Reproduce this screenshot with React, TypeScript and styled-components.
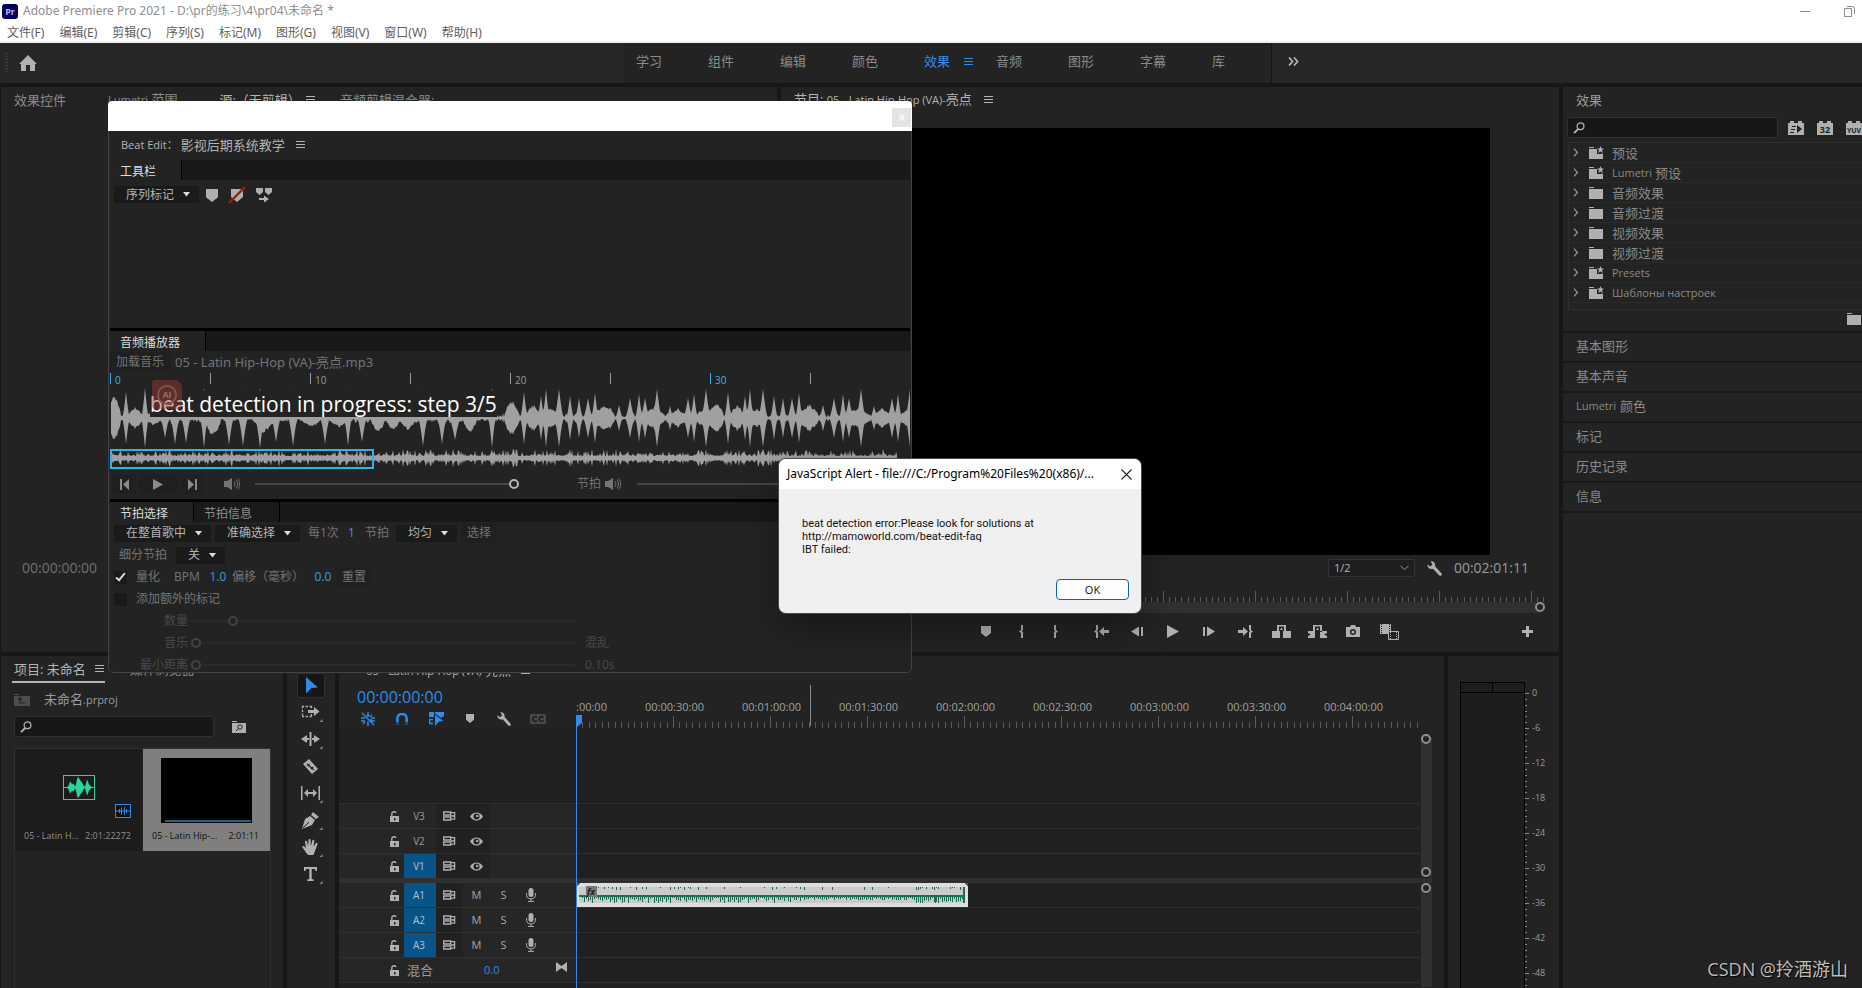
import React from "react";
import styled, { createGlobalStyle, css } from "styled-components";

const GlobalStyle = createGlobalStyle`
  *, *::before, *::after { box-sizing: border-box; }
  html, body { margin: 0; background: #171717; }
  body {
    font-family: "Open Sans", "Noto Sans CJK SC", sans-serif;
    font-size: 12px;
    line-height: 16px;
    color: #9a9a9a;
    overflow: hidden;
  }
  button, input, select { font: inherit; color: inherit; margin: 0; }
  svg { display: block; flex: none; }
`;

/* ---------- shared pieces ---------- */

const Page = styled.div`
  position: relative;
  display: flex;
  flex-direction: column;
  height: 100vh;
  overflow: hidden;
  background: #171717;
  white-space: nowrap;
`;

const PlainButton = styled.button`
  display: flex;
  align-items: center;
  justify-content: center;
  flex: none;
  padding: 0;
  border: 0;
  background: none;
`;

const Panel = styled.section`
  display: flex;
  flex-direction: column;
  min-width: 0;
  min-height: 0;
  overflow: hidden;
  background: #232323;
`;

const PanelHeader = styled.header`
  display: flex;
  align-items: center;
  flex: none;
  height: 27px;
  padding: 0 0 2px 13px;
  font-size: 13px;
`;

const Small = styled.span`
  font-size: 11px;
`;

const Burger = ({ color = "#b4b4b4" }: { color?: string }) => (
  <svg width="9" height="9" viewBox="0 0 9 9" fill={color} shapeRendering="crispEdges">
    <path d="M0 1h9v1H0zM0 4h9v1H0zM0 7h9v1H0z" />
  </svg>
);

/* ---------- title and menus ---------- */

const TitleBar = styled.div`
  display: flex;
  align-items: center;
  flex: none;
  height: 24px;
  padding: 0 7px 2px 2px;
  gap: 5px;
  background: #fff;
  color: #8d8d8d;
  font-family: "Noto Sans", "Noto Sans CJK SC", sans-serif;
`;

const AppLogo = styled.span`
  width: 16px;
  height: 15px;
  border-radius: 3px;
  background: #00005b;
  color: #b5b2ff;
  font-size: 9px;
  font-weight: 700;
  line-height: 15px;
  text-align: center;
`;

const WindowButtons = styled.div`
  display: flex;
  align-items: center;
  gap: 34px;
  margin-left: auto;
`;

const MenuBar = styled.nav`
  display: flex;
  flex: none;
  height: 19px;
  padding-left: 7px;
  gap: 15px;
  border-bottom: 2px solid #eeefee;
  background: #fff;
  color: #5e5e5e;
  font-family: "Noto Sans", "Noto Sans CJK SC", sans-serif;
`;

const WorkspaceBar = styled.div`
  display: flex;
  align-items: center;
  flex: none;
  height: 40px;
  margin-bottom: 4px;
  background: #262626;
`;

const HomeArea = styled.div`
  display: flex;
  align-items: center;
  flex: 630 1 0;
  gap: 11px;
  padding-left: 5px;
`;

const WorkspaceTabs = styled.div`
  display: flex;
  align-items: center;
  flex: none;
  width: 648px;
  height: 40px;
  padding-left: 12px;
  border-right: 1px solid #161616;
  background: #232323;
`;

const WorkspaceTab = styled(PlainButton)<{ $active?: boolean }>`
  justify-content: flex-start;
  width: 72px;
  gap: 14px;
  padding-bottom: 4px;
  font-size: 13px;
  color: ${(p) => (p.$active ? "#2d8ceb" : "#8a8a8a")};
`;

const MoreArea = styled.div`
  display: flex;
  align-items: center;
  flex: 584 1 0;
  padding: 0 0 3px 16px;
`;

/* ---------- page grid ---------- */

const Workspace = styled.main`
  display: flex;
  flex: 1;
  min-height: 0;
  gap: 4px;
  padding-left: 1px;
`;

const MainColumn = styled.div`
  display: flex;
  flex-direction: column;
  flex: 1;
  min-width: 0;
  gap: 4px;
`;

const Row = styled.div<{ $grow: number }>`
  display: flex;
  flex: ${(p) => p.$grow} 1 0;
  min-height: 0;
  gap: 4px;
`;

/* ---------- source panel ---------- */

const SourcePanel = styled(Panel)`
  flex: 776 1 0;
  justify-content: space-between;
`;

const ProgramPanel = styled(Panel)`
  flex: 778 1 0;
`;

const SourceTabs = styled(PanelHeader)`
  gap: 25px;
`;

const SourceTab = styled(PlainButton)<{ $active?: boolean }>`
  gap: 5px;
  padding-right: ${(p) => (p.$active ? 0 : 17)}px;
  color: ${(p) => (p.$active ? "#b4b4b4" : "#8a8a8a")};
`;

const SourceTime = styled.div`
  height: 26px;
  margin-bottom: 71px;
  padding-left: 21px;
  font-size: 14px;
  line-height: 26px;
  color: #707070;
`;

/* ---------- program panel ---------- */

const ProgramHeader = styled(PanelHeader)`
  gap: 12px;
  padding-left: 13px;
  color: #b4b4b4;
`;

const Video = styled.div`
  flex: 1;
  margin: 14px 69px 0;
  background: #000;
`;

const ProgramControls = styled.div`
  display: flex;
  align-items: center;
  justify-content: flex-end;
  flex: none;
  height: 26px;
  gap: 12px;
  padding-right: 30px;
  font-size: 14px;
  color: #9a9a9a;
`;

const SelectBox = styled.label<{ $width: number; $outlined?: boolean }>`
  display: flex;
  align-items: center;
  flex: none;
  width: ${(p) => p.$width}px;
  height: 17px;
  background: #1a1a1a;
  ${(p) =>
    p.$outlined &&
    css`
      height: 18px;
      border: 1px solid #333;
      border-radius: 2px;
      font-size: 11px;
      background: #1e1e1e;
    `}
  select {
    flex: 1;
    min-width: 0;
    height: 16px;
    padding: 0 0 0 ${(p) => (p.$outlined ? 5 : 12)}px;
    border: 0;
    appearance: none;
    background: none;
    color: #b4b4b4;
    line-height: 16px;
  }
  svg { margin-right: ${(p) => (p.$outlined ? 5 : 9)}px; }
`;

const ProgramRuler = styled.div`
  display: flex;
  align-items: flex-end;
  flex: none;
  height: 21px;
  margin: 0 14px;
  overflow: hidden;
`;

const ZoomBar = styled.div`
  display: flex;
  justify-content: flex-end;
  flex: none;
  height: 11px;
  margin: 0 14px;
  border-radius: 5px;
  background: #303030;
`;

const Knob = styled.span`
  flex: none;
  width: 10px;
  height: 10px;
  border: 2px solid #8f8f8f;
  border-radius: 50%;
  background: #232323;
`;

const Transport = styled.div`
  display: flex;
  align-items: center;
  flex: none;
  height: 39px;
  padding: 0 24px 2px 187px;
`;

const TransportGroup = styled.div<{ $pitch: number }>`
  display: flex;
  margin-right: 10px;
  button { width: ${(p) => p.$pitch}px; }
  & + & { margin-right: auto; }
`;

/* ---------- effects panel ---------- */

const EffectsPanel = styled(Panel)`
  flex: none;
  width: 299px;
`;

const SearchField = styled.label<{ $width: number }>`
  display: flex;
  align-items: center;
  flex: none;
  width: ${(p) => p.$width}px;
  height: 21px;
  padding-left: 5px;
  border: 1px solid #303030;
  border-radius: 3px;
  background: #171717;
  input {
    flex: 1;
    min-width: 0;
    height: 18px;
    border: 0;
    outline: 0;
    background: none;
  }
`;

const EffectsSearch = styled.div`
  display: flex;
  align-items: center;
  flex: none;
  height: 21px;
  margin: 3px 0 4px 4px;
  gap: 10px;
`;

const EffectFilters = styled.div`
  display: flex;
  gap: 13px;
`;

const EffectsList = styled.ul`
  flex: none;
  height: 168px;
  margin: 0 0 0 5px;
  padding: 0;
  border: 1px solid #2e2e2e;
  border-right: 0;
  list-style: none;
`;

const EffectsItem = styled.li`
  display: flex;
  align-items: center;
  height: 20px;
  padding-left: 4px;
  border-bottom: 1px solid #2a2a2a;
  font-size: 13px;
  color: #8a8a8a;
  svg:first-child { margin-right: 10px; }
  svg + svg { margin-right: 8px; }
`;

const BinRow = styled.div`
  display: flex;
  flex: none;
  align-items: flex-start;
  justify-content: flex-end;
  height: 21px;
  padding-top: 2px;
`;

const SidePanelTitle = styled(PlainButton)`
  justify-content: flex-start;
  height: 30px;
  padding: 0 0 3px 13px;
  gap: 4px;
  border-top: 2px solid #181818;
  font-size: 13px;
  color: #8a8a8a;
  &:last-of-type { height: 32px; border-bottom: 2px solid #181818; }
`;

const Watermark = styled.div`
  position: absolute;
  right: 14px;
  bottom: 7px;
  font-size: 18px;
  line-height: 24px;
  color: #bdbdbd;
  text-shadow: 1px 1px 1px #000;
`;

/* ---------- project panel ---------- */

const ProjectPanel = styled(Panel)`
  flex: none;
  width: 282px;
`;

const ProjectTabs = styled(PanelHeader)`
  gap: 23px;
  padding: 0 0 0 11px;
`;

const ProjectTab = styled(PlainButton)<{ $active?: boolean }>`
  height: 26px;
  gap: 9px;
  padding: 0 1px 0 2px;
  border-bottom: 2px solid ${(p) => (p.$active ? "#b4b4b4" : "transparent")};
  color: ${(p) => (p.$active ? "#b4b4b4" : "#8a8a8a")};
`;

const ProjectPath = styled.div`
  display: flex;
  align-items: center;
  flex: none;
  height: 33px;
  padding-left: 13px;
  gap: 14px;
  font-size: 13px;
`;

const ProjectSearch = styled.div`
  display: flex;
  align-items: center;
  flex: none;
  margin: 0 0 11px 13px;
  gap: 18px;
`;

const ThumbGrid = styled.div`
  display: flex;
  flex: 1;
  align-items: flex-start;
  gap: 1px;
  margin: 0 12px 0 13px;
  border: 1px solid #303030;
  border-bottom: 0;
`;

const Thumb = styled.figure<{ $selected?: boolean }>`
  position: relative;
  display: flex;
  flex-direction: column;
  flex: 1;
  height: 102px;
  margin: 0;
  padding-top: 9px;
  background: ${(p) => (p.$selected ? "#7f7f7f" : "#1c1c1c")};
  color: ${(p) => (p.$selected ? "#111" : "#8f8f8f")};
`;

const ThumbImage = styled.div<{ $audio?: boolean }>`
  display: flex;
  align-items: center;
  justify-content: center;
  height: 65px;
  padding-bottom: ${(p) => (p.$audio ? 6 : 0)}px;
`;

const ThumbFrame = styled.div`
  display: flex;
  align-items: flex-end;
  width: 91px;
  height: 65px;
  padding: 0 1px 1px 4px;
  background: #000;
  &::after { content: ""; flex: 1; height: 2px; background: #1f5f80; }
`;

const ThumbBadge = styled.span`
  position: absolute;
  right: 11px;
  bottom: 33px;
`;

const ThumbCaption = styled.figcaption`
  display: flex;
  justify-content: space-between;
  padding: 5px 11px 0 9px;
  font-size: 9px;
`;

/* ---------- tools ---------- */

const ToolsPanel = styled(Panel)`
  flex: none;
  width: 48px;
  align-items: center;
  padding-top: 17px;
  gap: 2px;
`;

const Tool = styled(PlainButton)<{ $active?: boolean }>`
  width: 28px;
  height: 25px;
  border: 1px solid ${(p) => (p.$active ? "#303030" : "transparent")};
  border-radius: 2px;
  background: ${(p) => (p.$active ? "#161616" : "none")};
`;

/* ---------- timeline ---------- */

const TimelinePanel = styled(Panel)`
  position: relative;
  flex: 1;
`;

const TimelineTitle = styled(PanelHeader)`
  gap: 10px;
  padding: 1px 0 0 11px;
  color: #b4b4b4;
`;

const TimelineTop = styled.div`
  display: flex;
  flex: none;
  height: 45px;
  padding-right: 24px;
`;

const TimelineTools = styled.div`
  flex: none;
  width: 237px;
`;

const TimelineTime = styled.div`
  height: 27px;
  padding-left: 18px;
  font-size: 16px;
  line-height: 28px;
  color: #2d8ceb;
`;

const TimelineIcons = styled.div`
  display: flex;
  padding-left: 12px;
  button { width: 34px; height: 17px; }
`;

const TimeRuler = styled.div`
  display: flex;
  flex-direction: column;
  justify-content: flex-end;
  flex: 1;
  min-width: 0;
  overflow: hidden;
  font-size: 11px;
  color: #a0a0a0;
`;

const TimeLabels = styled.div`
  display: flex;
  padding-bottom: 1px;
  span { flex: none; width: 97px; text-align: center; }
  span:first-child { width: 50px; text-align: left; }
`;

const TimelineBody = styled.div`
  display: flex;
  flex: 1;
  min-height: 0;
  padding-right: 12px;
`;

const Tracks = styled.div`
  flex: 1;
  min-width: 0;
  padding-top: 75px;
  background: #202020;
`;

const Track = styled.div<{ $first?: boolean }>`
  display: flex;
  height: ${(p) => (p.$first ? 24 : 25)}px;
  border-top: ${(p) => (p.$first ? 0 : 1)}px solid #303030;
`;

const TrackHead = styled.div`
  display: flex;
  flex: none;
  align-items: center;
  width: 237px;
  padding-left: 48px;
  background: #262626;
  color: #9a9a9a;
  font-size: 11px;
`;

const HeadCell = styled(PlainButton)<{ $on?: boolean; $dark?: boolean }>`
  align-self: stretch;
  width: 27px;
  color: #a8a8a8;
  background: ${(p) => (p.$dark ? "#212121" : "none")};
`;

const LabelCell = styled(HeadCell)`
  width: 32px;
  padding-right: 2px;
  font-size: 10px;
  color: ${(p) => (p.$on ? "#a8c4d6" : "#9a9a9a")};
  background: ${(p) => (p.$on ? "#085487" : "none")};
`;

const LockCell = styled(HeadCell)`
  width: 17px;
  padding-right: 2px;
`;

const MixLabel = styled.span`
  width: 80px;
  padding-left: 3px;
  font-size: 13px;
`;

const MixValue = styled.span`
  flex: 1;
  color: #2d8ceb;
`;

const Splitter = styled.div`
  flex: none;
  height: 5px;
  background: #303030;
`;

const ScrollColumn = styled.div`
  display: flex;
  flex-direction: column;
  flex: none;
  width: 11px;
  padding-top: 6px;
  margin-left: 1px;
`;

const ScrollPart = styled.div<{ $height?: number }>`
  display: flex;
  flex-direction: column;
  justify-content: space-between;
  height: ${(p) => (p.$height ? p.$height + "px" : "auto")};
  margin-bottom: 1px;
  flex: ${(p) => (p.$height ? "none" : 1)};
  border-radius: 5px 5px 0 0;
  background: #303030;
`;

const Playhead = styled.div`
  position: absolute;
  left: 237px;
  top: 71px;
  bottom: 0;
  width: 1px;
  background: #2d8ceb;
  &::before {
    content: "";
    position: absolute;
    left: 0;
    top: -12px;
    width: 6px;
    height: 12px;
    background: #2d8ceb;
    clip-path: polygon(0 0, 100% 0, 100% 65%, 20% 100%, 0 100%);
  }
`;

const HoverLine = styled.div`
  position: absolute;
  left: 471px;
  top: 29px;
  width: 1px;
  height: 41px;
  background: #8a8a8a;
`;

/* ---------- audio meters ---------- */

const MetersPanel = styled(Panel)`
  flex: none;
  flex-direction: row;
  width: 111px;
  padding-left: 12px;
`;

const MeterBox = styled.div`
  flex: none;
  width: 65px;
  margin-top: 26px;
  border: 1px solid #000;
  border-bottom: 0;
  background: #1d1d1d;
`;

const MeterClip = styled.div`
  display: flex;
  height: 10px;
  border-bottom: 1px solid #000;
  span { flex: 1; }
  span + span { border-left: 1px solid #000; }
`;

const MeterScale = styled.div`
  padding: 19px 0 0 3px;
  font-size: 9px;
  line-height: 35px;
  color: #9a9a9a;
  div { height: 35px; }
`;

/* ---------- beat edit window ---------- */

const BeatWindow = styled.section`
  position: absolute;
  left: 108px;
  top: 101px;
  display: flex;
  flex-direction: column;
  width: 804px;
  height: 572px;
  border-radius: 4px 4px 5px 5px;
  overflow: hidden;
  background: #232323;
`;

const BeatTitleBar = styled.div`
  display: flex;
  justify-content: flex-end;
  flex: none;
  height: 30px;
  padding: 7px 1px 0 0;
  background: #fff;
`;

const BeatClose = styled(PlainButton)`
  width: 19px;
  height: 19px;
  background: #e3e3e3;
`;

const BeatBody = styled.div`
  display: flex;
  flex-direction: column;
  flex: 1;
  min-height: 0;
  padding: 0 1px;
  border: 1px solid #444;
  border-top: 0;
  border-radius: 0 0 5px 5px;
  overflow: hidden;
`;

const BeatHeading = styled.div`
  display: flex;
  align-items: center;
  flex: none;
  height: 29px;
  padding: 0 0 2px 11px;
  gap: 3px;
  font-size: 13px;
  color: #b4b4b4;
  svg { margin-left: 8px; }
`;

const TabStrip = styled.div<{ $ruled?: boolean }>`
  display: flex;
  flex: none;
  height: ${(p) => (p.$ruled ? 23 : 20)}px;
  border-top: ${(p) => (p.$ruled ? 3 : 0)}px solid #000;
  background: #191919;
`;

const StripTab = styled(PlainButton)<{ $width: number; $idle?: boolean }>`
  justify-content: flex-start;
  width: ${(p) => p.$width}px;
  padding: 3px 0 0 10px;
  border-right: 1px solid #000;
  background: ${(p) => (p.$idle ? "#1a1a1a" : "#232323")};
  color: ${(p) => (p.$idle ? "#8f8f8f" : "#dcdcdc")};
`;

const ToolArea = styled.div`
  display: flex;
  align-items: flex-start;
  flex: none;
  height: 148px;
  padding: 6px 0 0 4px;
  gap: 7px;
`;

const IconRow = styled.div`
  display: flex;
  gap: 10px;
`;

const LoadRow = styled.div`
  display: flex;
  align-items: center;
  flex: none;
  height: 22px;
  color: #747474;
  gap: 5px;
`;

const LoadButton = styled(PlainButton)`
  width: 60px;
  height: 20px;
  background: #202020;
`;

const FileName = styled.span`
  font-family: "Noto Sans", "Noto Sans CJK SC", sans-serif;
  font-size: 13px;
`;

const BeatRuler = styled.div`
  display: flex;
  flex: none;
  height: 13px;
  font: 10px/14px "Open Sans", sans-serif;
`;

const BeatTick = styled.span<{ $blue?: boolean }>`
  flex: 1;
  height: 11px;
  padding-left: 4px;
  border-left: 1px solid ${(p) => (p.$blue ? "#35b0ee" : "#9a9a9a")};
  color: ${(p) => (p.$blue ? "#35b0ee" : "#9a9a9a")};
`;

const WaveArea = styled.div`
  position: relative;
  flex: none;
  height: 63px;
`;

const MiniWave = styled.div`
  position: relative;
  flex: none;
  height: 20px;
`;

const MiniSelection = styled.div`
  position: absolute;
  left: 0;
  top: 0;
  width: 264px;
  height: 20px;
  border: 2px solid #35b0ee;
`;

const ProgressNote = styled.div`
  position: absolute;
  left: 40px;
  top: 5px;
  height: 26px;
  background: #232323;
  color: #fff;
  font-size: 21px;
  line-height: 26px;
`;

const AiBadge = styled.div`
  position: absolute;
  left: 42px;
  top: -6px;
  width: 30px;
  height: 29px;
  padding: 5px;
  border-radius: 3px 8px 3px 3px;
  background: rgba(160, 60, 48, 0.45);
  span {
    display: block;
    width: 20px;
    height: 20px;
    border: 2px solid #7d5551;
    border-radius: 50%;
    color: #96706c;
    font-size: 9px;
    font-weight: 700;
    line-height: 16px;
    text-align: center;
  }
`;

const PlayerRow = styled.div`
  display: flex;
  align-items: center;
  flex: none;
  height: 30px;
  padding-left: 2px;
  color: #747474;
`;

const PlayerButton = styled(PlainButton)<{ $width: number }>`
  width: ${(p) => p.$width}px;
  height: 20px;
  margin-right: 2px;
  background: #202020;
`;

const Speaker = styled.span`
  margin: 0 15px 0 18px;
`;

const BeatSpeaker = styled.span`
  margin: 0 16px 0 4px;
`;

const BeatVolumeLabel = styled.span`
  margin-left: 58px;
`;

const Slider = styled.input<{ $width: number; $dim?: boolean }>`
  flex: none;
  width: ${(p) => p.$width}px;
  height: 12px;
  appearance: none;
  background: linear-gradient(${(p) => (p.$dim ? "#2b2b2b, #2b2b2b" : "#454545, #454545")}) center / 100% 2px no-repeat;
  &::-webkit-slider-thumb {
    appearance: none;
    width: 10px;
    height: 10px;
    border: 2px solid ${(p) => (p.$dim ? "#424242" : "#b4b4b4")};
    border-radius: 50%;
    background: #232323;
  }
`;

const FormRow = styled.div<{ $dim?: boolean }>`
  display: flex;
  align-items: center;
  flex: none;
  height: 22px;
  padding-left: 4px;
  color: ${(p) => (p.$dim ? "#4a4a4a" : "#747474")};
`;

const Blue = styled.span<{ $width: number }>`
  width: ${(p) => p.$width}px;
  text-align: center;
  color: #35a0d8;
`;

const Cell = styled.span<{ $width: number; $right?: boolean }>`
  flex: none;
  width: ${(p) => p.$width}px;
  text-align: ${(p) => (p.$right ? "right" : "left")};
`;

const FlatButton = styled(PlainButton)`
  width: 36px;
  height: 20px;
  background: #202020;
`;

const Gap = styled.span<{ $width: number }>`
  flex: none;
  width: ${(p) => p.$width}px;
`;

const CheckLabel = styled.label`
  display: flex;
  align-items: center;
  gap: 9px;
`;

const CheckBox = styled.input`
  position: relative;
  width: 13px;
  height: 13px;
  appearance: none;
  background: #191919;
  &:checked::after {
    content: "";
    position: absolute;
    left: 4px;
    top: 0;
    width: 5px;
    height: 10px;
    border: solid #d8d8d8;
    border-width: 0 2px 2px 0;
    transform: rotate(40deg);
  }
`;

/* ---------- alert ---------- */

const Alert = styled.section`
  position: absolute;
  left: 779px;
  top: 459px;
  width: 362px;
  height: 154px;
  border-radius: 7px;
  overflow: hidden;
  background: #f0f0f0;
  color: #111;
  box-shadow: 0 0 0 1px #4a4a4a, 0 14px 36px rgba(0, 0, 0, 0.35);
`;

const AlertWrap = styled.div`
  display: flex;
  flex-direction: column;
  height: 100%;
`;

const AlertTitle = styled.header`
  display: flex;
  align-items: center;
  justify-content: space-between;
  height: 30px;
  padding: 0 9px 0 8px;
  background: #fff;
  color: #000;
  font-family: "Noto Sans", sans-serif;
`;

const AlertText = styled.p`
  flex: 1;
  margin: 28px 23px 0;
  font-size: 11px;
  line-height: 13px;
  font-family: Roboto, sans-serif;
`;

const AlertButton = styled.button`
  align-self: flex-end;
  width: 73px;
  height: 21px;
  margin: 0 12px 13px;
  padding: 0;
  border: 1px solid #0067c0;
  border-radius: 4px;
  background: #fdfdfd;
  font-size: 11px;
  line-height: 18px;
`;

/* ---------- icons ---------- */

const G = "#b0b0b0";

const HomeIcon = () => (
  <svg width="18" height="16" viewBox="0 0 18 16" fill={G}>
    <path d="M9 0l9 9h-2v7h-5v-6H7v6H2V9H0z" />
  </svg>
);

const Grip = () => (
  <svg width="3" height="20" viewBox="0 0 3 20" fill="#3c3c3c" shapeRendering="crispEdges">
    {[0, 3, 6, 9, 12, 15, 18].map((y) => (
      <rect key={y} y={y} width="3" height="1" />
    ))}
  </svg>
);

const Magnifier = ({ size = 12, color = G }: { size?: number; color?: string }) => (
  <svg width={size} height={size} viewBox="0 0 12 12" fill="none" stroke={color}>
    <circle cx="7.5" cy="4.3" r="3.4" strokeWidth="1.3" />
    <path d="M5.2 7L1 11.2" strokeWidth="1.8" />
  </svg>
);

const Chevron = () => (
  <svg width="6" height="9" viewBox="0 0 6 9" fill="none" stroke="#9a9a9a" strokeWidth="1.2">
    <path d="M1 .6l3.4 3.9L1 8.4" />
  </svg>
);

const Folder = ({ star }: { star?: boolean }) => (
  <svg width="15" height="14" viewBox="0 0 15 14" fill={G}>
    <path d="M0 1h5v1H0z" />
    <path d="M0 3h14v10H0z" />
    {star && (
      <>
        <path d="M8 0h7v8H8z" fill="#232323" />
        <path d="M11.500 0l1 2.500 2.500.1-2 1.600.8 2.800-2.300-1.600L9.200 7l.8-2.800-2-1.600 2.500-.1z" />
        <path d="M12 8l1-.5 1 .5v1h-2z" />
      </>
    )}
  </svg>
);

const FxBadge = ({ label }: { label: string }) => (
  <svg width="16" height="14" viewBox="0 0 16 14">
    <path d="M0 2h2V0h4v2h4V0h4v2h2v12H0z" fill={G} />
    {label ? (
      <text x="8" y="11.500" textAnchor="middle" fontSize={label.length > 2 ? 7 : 9} fontWeight="700" fill="#232323">
        {label}
      </text>
    ) : (
      <path d="M9 4l5 4-5 4zM4 5h4v1H4zM3 8h4v1H3zM2 11h4v1H2z" fill="#232323" />
    )}
  </svg>
);

const Marker = ({ w = 10, h = 12, color = G }: { w?: number; h?: number; color?: string }) => (
  <svg width={w} height={h} viewBox="0 0 10 12" fill={color} preserveAspectRatio="none">
    <path d="M0 0h10v7.500L5 12 0 7.500z" />
  </svg>
);

const MarkerOff = () => (
  <svg width="18" height="18" viewBox="0 0 18 18">
    <path d="M3 3h12v8l-6 5-6-5z" fill={G} />
    <path d="M1 17L17 1" stroke="#8e2413" strokeWidth="2.400" />
  </svg>
);

const MarkerMove = () => (
  <svg width="16" height="15" viewBox="0 0 16 15" fill={G}>
    <path d="M0 0h7v4L3.500 7 0 4zM9 0h7v4l-3.500 3L9 4zM3 10h5V7.500l5 3.500-5 3.500V12H3z" />
  </svg>
);

const Caret = () => (
  <svg width="7" height="5" viewBox="0 0 7 5" fill="#dcdcdc">
    <path d="M0 0h7L3.500 4.500z" />
  </svg>
);

const Wrench = ({ size = 15 }: { size?: number }) => (
  <svg width={size} height={size} viewBox="0 0 15 15" fill={G}>
    <path d="M3.500.3C6.500-.3 8.800 2.200 8 5.200l6.600 7.400c.9 1.200-.9 3-2.200 2L6 7.800C3 8.800.2 6.500.4 3.600l2.900 2L5.500 3.600z" />
  </svg>
);

const transportPaths: { name: string; d: string; w: number }[] = [
  { name: "Add marker", w: 10, d: "M0 1h10v7L5 12 0 8z" },
  { name: "Mark in", w: 6, d: "M3 0h2v4.500L4 6l1 1.500V13H3V8L1 6.500 3 5z" },
  { name: "Mark out", w: 6, d: "M1 0h2v5l2 1.500L3 8v5H1V7.500L2 6 1 4.500z" },
  { name: "Go to in", w: 15, d: "M2 0h2v4.500L3 6l1 1.500V13H2V8L0 6.500 2 5zM5 6.500L10 2v3h5v3h-5v3z" },
  { name: "Step back", w: 12, d: "M0 6.500L8 1.500v10zM10 2h2v9h-2z" },
  { name: "Play", w: 12, d: "M0 0l12 6.500L0 13z" },
  { name: "Step forward", w: 12, d: "M0 2h2v9H0zM4 1.500l8 5-8 5z" },
  { name: "Go to out", w: 15, d: "M13 0h-2v4.500L12 6l-1 1.500V13h2V8l2-1.500L13 5zM10 6.500L5 2v3H0v3h5v3z" },
  { name: "Lift", w: 19, d: "M0 6h8v7H0zM11 6h8v7h-8zM5 0h9v7h-2V1.500H7V7H5zM8 5l1.500-2.500L11 5z" },
  { name: "Extract", w: 19, d: "M0 6h7v7H0V11l3-1.500L0 8zM19 6h-7v7h7V11l-3-1.500L19 8zM5 0h9v7h-2V1.500H7V7H5zM8 5l1.500-2.500L11 5z" },
  {
    name: "Export frame",
    w: 14,
    d: "M0 2h4l1-2h4l1 2h4v10H0zM7 4a3 3 0 100 6 3 3 0 000-6zM7 5.500a1.500 1.500 0 110 3 1.500 1.500 0 010-3z",
  },
];

const TransportIcon = ({ d, w }: { d: string; w: number }) => (
  <svg width={w} height="13" viewBox={`0 0 ${w} 13`} fill={G} fillRule={w === 14 ? "evenodd" : "nonzero"}>
    <path d={d} />
  </svg>
);

const CompareIcon = () => (
  <svg width="19" height="16" viewBox="0 0 19 16" fill={G}>
    <path d="M0 0h11v10H0z" />
    <path d="M1.500 0v10M9.500 0v10" stroke="#232323" strokeDasharray="1 1" />
    <path d="M8.500 7.500h10v8h-10z" fill="#232323" stroke={G} />
    <path d="M10.500 8v8M16.500 8v8" stroke={G} strokeDasharray="1 1" />
  </svg>
);

const SpeakerIcon = () => (
  <svg width="16" height="12" viewBox="0 0 16 12" fill="none" stroke="#747474">
    <path d="M0 3h3l5-3v12L3 9H0z" fill="#747474" stroke="none" />
    <path d="M10 3c1.200 2 1.200 4 0 6M12 1.500c2 3 2 6 0 9M14 .5c2 3.500 2 7.500 0 11" />
  </svg>
);

const PlayIcon = ({ d, w = 9 }: { d: string; w?: number }) => (
  <svg width={w} height="11" viewBox={`0 0 ${w} 11`} fill="#8a8a8a">
    <path d={d} />
  </svg>
);

const LockIcon = () => (
  <svg width="9" height="11" viewBox="0 0 9 11">
    <path d="M0 5h9v6H0z" fill={G} />
    <path d="M1.800 5V3a2.200 2.200 0 014.200-1" fill="none" stroke={G} strokeWidth="1.400" />
    <path d="M4 7h1.500v2.500H4z" fill="#262626" />
  </svg>
);

const SyncIcon = () => (
  <svg width="13" height="10" viewBox="0 0 13 10" fill="none" stroke={G} strokeWidth="1.300">
    <path d="M.7 1h7v3h-7zM.7 6h7v3h-7zM8 1.700h3.600v6.500H8M8 5h4" />
  </svg>
);

const EyeIcon = () => (
  <svg width="13" height="9" viewBox="0 0 13 9">
    <path d="M0 4.500C3-1 10-1 13 4.500 10 10 3 10 0 4.500z" fill={G} />
    <circle cx="6.500" cy="4.500" r="3" fill="#212121" />
    <circle cx="7.200" cy="4" r="1.200" fill={G} />
  </svg>
);

const MicIcon = () => (
  <svg width="10" height="14" viewBox="0 0 10 14" fill={G}>
    <rect x="2.500" y="0" width="5" height="9" rx="2.500" />
    <path d="M.6 5v2.500C.6 12 9.400 12 9.400 7.500V5M5 11v2M2 13.400h6" fill="none" stroke={G} />
  </svg>
);

const toolIcons: { name: string; art: React.ReactNode; corner?: boolean }[] = [
  { name: "Selection", art: <path d="M5 1l12 10.500-6.500.5L5 17.500z" fill="#2d8ceb" /> },
  {
    name: "Track select",
    corner: true,
    art: (
      <>
        <path d="M1 3.500h10M1 13.500h10M1.500 3v11M10.500 3v3M10.500 11v3" fill="none" stroke={G} strokeWidth="1.300" strokeDasharray="2.200 1.500" />
        <path d="M7 7h6V4l5.500 4.500L13 13v-3H7z" />
      </>
    ),
  },
  { name: "Ripple edit", corner: true, art: <path d="M8.500 2h2v14h-2zM0 9l6-4v3h2v2H6v3zM19 9l-6-4v3h-2v2h2v3z" /> },
  {
    name: "Razor",
    art: (
      <>
        <path d="M2 7l6-5 9 10-6 5z" />
        <path d="M6 7l7 6M6.500 9l2-2M10 12l2-2" stroke="#232323" strokeWidth="1.300" />
      </>
    ),
  },
  { name: "Slip", corner: true, art: <path d="M0 2h1.500v14H0zM17.500 2H19v14h-1.500zM3 9l4-4v3h5V5l4 4-4 4v-3H7v3z" /> },
  {
    name: "Pen",
    corner: true,
    art: (
      <>
        <path d="M12 1l6 5-3 2-5-4zM9 5l5 4-3 5-10 4L4 8z" />
        <path d="M2 17l6-6" stroke="#232323" />
      </>
    ),
  },
  {
    name: "Hand",
    corner: true,
    art: (
      <path d="M6 16L1.500 9.500c-.8-1.200.9-2 1.800-1L5 10 4 4c-.2-1.500 1.600-1.700 2-.3L7.200 8 7.500 2c0-1.500 2-1.500 2.100 0l.3 6 1.400-5.500c.4-1.400 2.200-1 2 .5L12.600 8.500l2.200-3.300c.8-1.200 2.300-.3 1.700 1L14 13l-1.500 4h-5z" />
    ),
  },
  { name: "Type", corner: true, art: <path d="M3 2h13v4h-1.500L14 4h-3.300v10l2 .5V16H6.300v-1.500l2-.5V4H5l-.5 2H3z" /> },
];

/* ---------- waveforms ---------- */

const pseudo = (n: number) => {
  const v = Math.sin(n * 12.9898 + 4.1) * 43758.5453;
  return v - Math.floor(v);
};

// [position, height, half width] of each transient
const openingPeaks: [number, number, number][] = [
  [4, 26, 5], [16, 26, 2], [25, 12, 5], [35, 30, 2], [44, 8, 5], [55, 20, 3], [65, 26, 3], [76, 25, 3], [94, 30, 2],
  [103, 20, 6], [119, 27, 3], [133, 28, 3], [150, 30, 3], [154, 16, 8], [166, 24, 3], [183, 28, 3], [201, 10, 8],
  [215, 26, 3], [229, 10, 8], [238, 28, 2], [252, 24, 3], [268, 16, 5], [283, 13, 5], [298, 13, 6], [313, 28, 3],
  [332, 26, 3], [345, 22, 4], [360, 16, 5], [382, 30, 2],
];

const loopPeaks: [number, number, number][] = [
  [2, 18, 6], [14, 26, 2], [23, 14, 5], [31, 22, 2], [36, 29, 2], [42, 10, 9], [49, 29, 3], [60, 22, 2], [69, 20, 2],
  [78, 20, 3], [85, 25, 2], [95, 15, 8], [109, 13, 2], [120, 20, 3], [129, 24, 2], [135, 20, 3], [147, 29, 3], [144, 11, 10],
  [160, 12, 2], [168, 10, 6], [178, 20, 3], [184, 24, 2], [196, 29, 3], [197, 11, 10],
];

const mainPeaks = [
  ...openingPeaks,
  ...loopPeaks.map(([x, a, w]) => [x + 400, a, w] as [number, number, number]),
  ...loopPeaks.map(([x, a, w]) => [x + 604, a, w] as [number, number, number]),
];

const mainAmp = (x: number) => {
  let a = 1 + 5 * pseudo(x) * pseudo(x * 0.7);
  for (const [c, h, w] of mainPeaks) {
    const d = Math.abs(x - c) / (w + 2);
    if (d < 1) a = Math.max(a, w > 4 ? h * Math.sqrt(1 - d) * (0.7 + 0.3 * pseudo(x + 9)) : h * Math.pow(1 - d, 1.5));
  }
  return a;
};

const miniAmp = (x: number) => (pseudo(x * 0.31) > 0.82 ? 5 + 4 * pseudo(x + 3) : 2 + 4 * pseudo(x + 7) * pseudo(x * 0.5));

const clipIconAmps = [0.5, 0.5, 0.5, 0.5, 1, 3, 6, 5, 3, 4, 3, 1, 3, 8, 11, 9, 8, 6, 5, 3, 1, 1, 4, 8, 6, 3, 2, 1, 0.5, 0.5, 0.5];

const envelope = (from: number, to: number, mid: number, amp: (x: number) => number) => {
  const up: string[] = [];
  const down: string[] = [];
  for (let x = from; x <= to; x++) {
    const a = amp(x);
    up.push(`${x} ${(mid - a).toFixed(1)}`);
    down.unshift(`${x} ${(mid + a).toFixed(1)}`);
  }
  return `M${up.join("L")}L${down.join("L")}z`;
};

const mainWave = envelope(1, 800, 32, mainAmp);
const miniWave = envelope(2, 787, 9, miniAmp);
const clipIconWave = envelope(1, 31, 12.5, (x) => clipIconAmps[x - 1]);

const Clip = () => {
  const bars: React.ReactNode[] = [];
  for (let x = 6; x < 388; x += 2) {
    const quiet = x > 230 && x < 340;
    const low = 1 + Math.floor(pseudo(x) * (quiet ? 3 : 6));
    bars.push(<rect key={x} x={x} y="14" width="1" height={low} />);
    if (pseudo(x + 50) > (quiet ? 0.95 : 0.6)) {
      bars.push(<rect key={"t" + x} x={x} y="4" width="1" height={1 + Math.floor(pseudo(x + 1) * 3)} />);
    }
  }
  return (
    <svg width="392" height="24" viewBox="0 0 392 24" shapeRendering="crispEdges">
      <rect width="392" height="24" fill="#dedede" />
      <rect x="3" y="4" width="386" height="16" fill="#cacaca" />
      <g fill="#1b6e52">
        <rect x="3" y="12" width="385" height="2" />
        {bars}
        <rect x="359" y="14" width="1" height="6" />
        <rect x="387" y="4" width="2" height="16" />
      </g>
      <path d="M0 4l4-4H0zM388 0l4 4V0z" fill="#555" />
      <rect x="10" y="3" width="11" height="11" fill="#777" />
      <text x="15" y="12" textAnchor="middle" fontSize="9" fontStyle="italic" fontWeight="700" fill="#222">
        fx
      </text>
    </svg>
  );
};

const Ticks = ({ pitch, count, major, minor }: { pitch: number; count: number; major: number; minor: number }) => (
  <svg width={Math.round((pitch * count) / 15) + 1} height={major} fill="#5a5a5a" shapeRendering="crispEdges">
    {Array.from({ length: count + 1 }, (_, i) => {
      const h = i % 15 === 0 ? major : minor;
      return <rect key={i} x={Math.round((pitch * i) / 15)} y={major - h} width="1" height={h} />;
    })}
  </svg>
);

/* ---------- data ---------- */

const menus = ["文件(F)", "编辑(E)", "剪辑(C)", "序列(S)", "标记(M)", "图形(G)", "视图(V)", "窗口(W)", "帮助(H)"];
const workspaces = ["学习", "组件", "编辑", "颜色", "效果", "音频", "图形", "字幕", "库"];
const effects: { latin?: string; label?: string; star?: boolean }[] = [
  { label: "预设", star: true },
  { latin: "Lumetri", label: "预设", star: true },
  { label: "音频效果" },
  { label: "音频过渡" },
  { label: "视频效果" },
  { label: "视频过渡" },
  { latin: "Presets", star: true },
  { latin: "Шаблоны настроек", star: true },
];
const times = [":00:00", "00:00:30:00", "00:01:00:00", "00:01:30:00", "00:02:00:00", "00:02:30:00", "00:03:00:00", "00:03:30:00", "00:04:00:00"];
const levels = ["0", "-6", "-12", "-18", "-24", "-30", "-36", "-42", "-48"];

const SequenceName = () => (
  <span>
    <Small>05 - Latin Hip-Hop (VA)-</Small>亮点
  </span>
);

const Dropdown = ({ width, name, value }: { width: number; name: string; value: string }) => (
  <SelectBox $width={width}>
    <select aria-label={name} defaultValue={value}>
      <option>{value}</option>
    </select>
    <Caret />
  </SelectBox>
);

const VideoTrack = ({ name, on }: { name: string; on?: boolean }) => (
  <Track>
    <TrackHead>
      <LockCell aria-label="Lock"><LockIcon /></LockCell>
      <LabelCell $on={on}>{name}</LabelCell>
      <HeadCell $dark aria-label="Sync lock"><SyncIcon /></HeadCell>
      <HeadCell $dark aria-label="Visibility"><EyeIcon /></HeadCell>
    </TrackHead>
  </Track>
);

const AudioTrack = ({ name, first }: { name: string; first?: boolean }) => (
  <Track $first={first}>
    <TrackHead>
      <LockCell aria-label="Lock"><LockIcon /></LockCell>
      <LabelCell $on>{name}</LabelCell>
      <HeadCell $dark aria-label="Sync lock"><SyncIcon /></HeadCell>
      <HeadCell>M</HeadCell>
      <HeadCell>S</HeadCell>
      <HeadCell aria-label="Record"><MicIcon /></HeadCell>
    </TrackHead>
    {first && <Clip />}
  </Track>
);

/* ---------- windows ---------- */

const BeatEdit = () => (
  <BeatWindow aria-label="Beat Edit">
    <BeatTitleBar>
      <BeatClose aria-label="Close">
        <svg width="6" height="7" viewBox="0 0 6 7" stroke="#fafafa" strokeWidth="1.600"><path d="M.5.5l5 6M5.500.5l-5 6" /></svg>
      </BeatClose>
    </BeatTitleBar>
    <BeatBody>
      <BeatHeading>
        <Small>Beat Edit：</Small>影视后期系统教学<Burger />
      </BeatHeading>
      <TabStrip><StripTab $width={72}>工具栏</StripTab></TabStrip>
      <ToolArea>
        <Dropdown width={85} name="标记类型" value="序列标记" />
        <IconRow>
          <PlainButton aria-label="Add markers"><Marker w={12} h={13} /></PlainButton>
          <PlainButton aria-label="Remove markers"><MarkerOff /></PlainButton>
          <PlainButton aria-label="Move markers"><MarkerMove /></PlainButton>
        </IconRow>
      </ToolArea>
      <TabStrip $ruled><StripTab $width={96}>音频播放器</StripTab></TabStrip>
      <LoadRow>
        <LoadButton>加载音乐</LoadButton>
        <FileName>05 - Latin Hip-Hop (VA)-亮点.mp3</FileName>
      </LoadRow>
      <BeatRuler>
        <BeatTick $blue>0</BeatTick><BeatTick /><BeatTick>10</BeatTick><BeatTick />
        <BeatTick>20</BeatTick><BeatTick /><BeatTick $blue>30</BeatTick><BeatTick />
      </BeatRuler>
      <WaveArea>
        <svg width="800" height="63" viewBox="0 0 800 63" fill="#a0a0a0"><path d={mainWave} /></svg>
        <ProgressNote>beat detection in progress: step 3/5</ProgressNote>
        <AiBadge><span>AI</span></AiBadge>
      </WaveArea>
      <MiniWave>
        <svg width="800" height="20" viewBox="0 0 800 20" fill="#a0a0a0"><path d={miniWave} /></svg>
        <MiniSelection />
      </MiniWave>
      <PlayerRow>
        <PlayerButton $width={24} aria-label="Previous"><PlayIcon d="M0 0h2v11H0zM9 0v11L3 5.500z" /></PlayerButton>
        <PlayerButton $width={40} aria-label="Play"><PlayIcon w={10} d="M0 0l10 5.500L0 11z" /></PlayerButton>
        <PlayerButton $width={24} aria-label="Next"><PlayIcon d="M7 0h2v11H7zM0 0v11l6-5.500z" /></PlayerButton>
        <Speaker><SpeakerIcon /></Speaker>
        <Slider type="range" aria-label="音量" $width={264} defaultValue={100} />
        <BeatVolumeLabel>节拍</BeatVolumeLabel>
        <BeatSpeaker><SpeakerIcon /></BeatSpeaker>
        <Slider type="range" aria-label="节拍音量" $width={264} defaultValue={100} />
      </PlayerRow>
      <TabStrip $ruled>
        <StripTab $width={84}>节拍选择</StripTab>
        <StripTab $width={86} $idle>节拍信息</StripTab>
      </TabStrip>
      <FormRow>
        <Dropdown width={97} name="范围" value="在整首歌中" />
        <Gap $width={4} />
        <Dropdown width={85} name="选择方式" value="准确选择" />
        <Gap $width={8} />
        <Cell $width={36}>每1次</Cell>
        <Blue $width={15}>1</Blue>
        <Gap $width={6} />
        <Cell $width={31}>节拍</Cell>
        <Dropdown width={61} name="分布" value="均匀" />
        <Gap $width={4} />
        <FlatButton>选择</FlatButton>
      </FormRow>
      <FormRow>
        <Gap $width={5} />
        <Cell $width={57}>细分节拍</Cell>
        <Dropdown width={49} name="细分节拍" value="关" />
      </FormRow>
      <FormRow>
        <CheckLabel><CheckBox type="checkbox" defaultChecked />量化</CheckLabel>
        <Gap $width={14} />
        <Cell $width={30}>BPM</Cell>
        <Blue $width={28}>1.0</Blue>
        <Cell $width={78}>偏移（毫秒）</Cell>
        <Blue $width={26}>0.0</Blue>
        <FlatButton>重置</FlatButton>
      </FormRow>
      <FormRow><CheckLabel><CheckBox type="checkbox" />添加额外的标记</CheckLabel></FormRow>
      <FormRow $dim>
        <Cell $width={74} $right>数量</Cell><Gap $width={3} />
        <Slider type="range" aria-label="数量" $width={384} $dim defaultValue={10} />
      </FormRow>
      <FormRow $dim>
        <Cell $width={74} $right>音乐</Cell><Gap $width={3} />
        <Slider type="range" aria-label="音乐" $width={384} $dim defaultValue={0} />
        <Gap $width={10} />混乱
      </FormRow>
      <FormRow $dim>
        <Cell $width={74} $right>最小距离</Cell><Gap $width={3} />
        <Slider type="range" aria-label="最小距离" $width={384} $dim defaultValue={0} />
        <Gap $width={10} />0.10s
      </FormRow>
    </BeatBody>
  </BeatWindow>
);

const AlertDialog = () => (
  <Alert role="alertdialog" aria-label="JavaScript Alert">
    <AlertWrap>
      <AlertTitle>
        <span>JavaScript Alert - file:///C:/Program%20Files%20(x86)/...</span>
        <PlainButton aria-label="Close">
          <svg width="11" height="11" viewBox="0 0 11 11" stroke="#222" strokeWidth="1.100"><path d="M.5.5l10 10M10.500.5l-10 10" /></svg>
        </PlainButton>
      </AlertTitle>
      <AlertText>
        beat detection error:Please look for solutions at<br />
        http://mamoworld.com/beat-edit-faq<br />
        IBT failed:
      </AlertText>
      <AlertButton>OK</AlertButton>
    </AlertWrap>
  </Alert>
);

/* ---------- panels ---------- */

const Program = () => (
  <ProgramPanel>
    <ProgramHeader>
      <span>节目: <SequenceName /></span>
      <Burger />
    </ProgramHeader>
    <Video />
    <ProgramControls>
      <SelectBox $width={87} $outlined>
        <select aria-label="Playback resolution" defaultValue="1/2"><option>1/2</option></select>
        <svg width="9" height="6" viewBox="0 0 9 6" fill="none" stroke="#9a9a9a"><path d="M.5.8l4 4 4-4" /></svg>
      </SelectBox>
      <PlainButton aria-label="Settings"><Wrench /></PlainButton>
      <span>00:02:01:11</span>
    </ProgramControls>
    <ProgramRuler><Ticks pitch={92} count={122} major={11} minor={5} /></ProgramRuler>
    <ZoomBar><Knob /></ZoomBar>
    <Transport>
      <TransportGroup $pitch={35}>
        {transportPaths.slice(0, 3).map((t) => (
          <PlainButton key={t.name} aria-label={t.name}><TransportIcon d={t.d} w={t.w} /></PlainButton>
        ))}
      </TransportGroup>
      <TransportGroup $pitch={36}>
        {transportPaths.slice(3).map((t) => (
          <PlainButton key={t.name} aria-label={t.name}><TransportIcon d={t.d} w={t.w} /></PlainButton>
        ))}
        <PlainButton aria-label="Comparison view"><CompareIcon /></PlainButton>
      </TransportGroup>
      <PlainButton aria-label="Button editor">
        <svg width="16" height="11" viewBox="0 0 16 11" fill={G}><path d="M7 0h3v4h4v3h-4v4H7V7H3V4h4z" /></svg>
      </PlainButton>
    </Transport>
  </ProgramPanel>
);

const Project = () => (
  <ProjectPanel>
    <ProjectTabs>
      <ProjectTab $active>项目: 未命名<Burger /></ProjectTab>
      <ProjectTab>媒体浏览器</ProjectTab>
    </ProjectTabs>
    <ProjectPath>
      <svg width="16" height="13" viewBox="0 0 16 13">
        <path d="M0 1h5v1H0zM0 3h16v10H0z" fill="#4c4c4c" />
        <path d="M6 5v5h5M4 7l2-2.500L8 7" fill="none" stroke="#232323" strokeWidth="1.200" />
      </svg>
      <span>未命名<Small>.prproj</Small></span>
    </ProjectPath>
    <ProjectSearch>
      <SearchField $width={200}><Magnifier /><input type="search" aria-label="搜索项目" /></SearchField>
      <PlainButton aria-label="Find">
        <svg width="14" height="12" viewBox="0 0 14 12">
          <path d="M0 0h5v1H0zM0 2h14v10H0z" fill={G} />
          <g fill="none" stroke="#232323"><circle cx="8" cy="6" r="2.200" /><path d="M6.500 7.500L4 10" /></g>
        </svg>
      </PlainButton>
    </ProjectSearch>
    <ThumbGrid>
      <Thumb>
        <ThumbImage $audio>
          <svg width="32" height="25" viewBox="0 0 32 25" fill="#2bd49a">
            <rect x=".5" y=".5" width="31" height="24" fill="none" stroke="#2bd49a" />
            <path d={clipIconWave} />
          </svg>
        </ThumbImage>
        <ThumbBadge>
          <svg width="16" height="14" viewBox="0 0 16 14" stroke="#2d8ceb" fill="#111">
            <rect x=".5" y=".5" width="15" height="13" />
            <path d="M1 7h14M4.500 5v4M6.500 3.500v7M9.500 3v8M11.500 5v4" />
          </svg>
        </ThumbBadge>
        <ThumbCaption><span>05 - Latin H...</span><span>2:01:22272</span></ThumbCaption>
      </Thumb>
      <Thumb $selected>
        <ThumbImage><ThumbFrame /></ThumbImage>
        <ThumbCaption><span>05 - Latin Hip-...</span><span>2:01:11</span></ThumbCaption>
      </Thumb>
    </ThumbGrid>
  </ProjectPanel>
);

const Timeline = () => (
  <TimelinePanel>
    <TimelineTitle>
      <Small>×</Small><SequenceName /><Burger />
    </TimelineTitle>
    <TimelineTop>
      <TimelineTools>
        <TimelineTime>00:00:00:00</TimelineTime>
        <TimelineIcons>
          <PlainButton aria-label="Nest">
            <svg width="14" height="14" viewBox="0 0 14 14" stroke="#2d8ceb" strokeWidth="1.400" fill="none">
              <path d="M0 6h4M10 6h4M0 9h4M10 9h4M7 0v5M7 9v5M5.500 3.500h3M1 1l12 12M4 10l-2 2M9 5l2-2M9 8h2" />
            </svg>
          </PlainButton>
          <PlainButton aria-label="Snap">
            <svg width="12" height="12" viewBox="0 0 12 12" fill="none" strokeWidth="2.600">
              <path d="M1.400 9V5.500a4.600 4.600 0 019.200 0V9" stroke="#2d8ceb" />
              <path d="M1.400 9v3M10.600 9v3" stroke="#1b4c7c" />
            </svg>
          </PlainButton>
          <PlainButton aria-label="Linked selection">
            <svg width="15" height="14" viewBox="0 0 15 14" fill="#2d8ceb">
              <path d="M0 0h5v5H0zM6 0h9v4l-3 2-6-4.500zM6 3l8.500 6-4.500.5L6 14z" />
              <path d="M4 7.500H.7v4H4" fill="none" stroke="#2d8ceb" strokeWidth="1.400" />
            </svg>
          </PlainButton>
          <PlainButton aria-label="Add marker"><Marker w={8} h={9} /></PlainButton>
          <PlainButton aria-label="Timeline settings"><Wrench size={14} /></PlainButton>
          <PlainButton aria-label="Captions">
            <svg width="16" height="10" viewBox="0 0 16 10">
              <rect width="16" height="10" rx="1.500" fill="#4a4a4a" />
              <path d="M7 3.500C5 1.500 2.800 3 2.800 5S5 8.500 7 6.500M13.500 3.500C11.500 1.500 9.300 3 9.300 5s2.200 3.500 4.200 1.500" fill="none" stroke="#1c1c1c" strokeWidth="1.600" />
            </svg>
          </PlainButton>
        </TimelineIcons>
      </TimelineTools>
      <TimeRuler>
        <TimeLabels>{times.map((t) => <span key={t}>{t}</span>)}</TimeLabels>
        <Ticks pitch={97} count={130} major={12} minor={6} />
      </TimeRuler>
    </TimelineTop>
    <TimelineBody>
      <Tracks>
        <VideoTrack name="V3" />
        <VideoTrack name="V2" />
        <VideoTrack name="V1" on />
        <Splitter />
        <AudioTrack name="A1" first />
        <AudioTrack name="A2" />
        <AudioTrack name="A3" />
        <Track>
          <TrackHead>
            <LockCell aria-label="Lock"><LockIcon /></LockCell>
            <MixLabel>混合</MixLabel>
            <MixValue>0.0</MixValue>
            <svg width="20" height="16" viewBox="0 0 20 16" fill={G}><path d="M0 0l5.500 4L11 0v10L5.500 6 0 10z" /></svg>
          </TrackHead>
        </Track>
        <Track />
      </Tracks>
      <ScrollColumn>
        <ScrollPart $height={143}><Knob /><Knob /></ScrollPart>
        <Splitter />
        <ScrollPart><Knob /></ScrollPart>
      </ScrollColumn>
    </TimelineBody>
    <HoverLine />
    <Playhead />
  </TimelinePanel>
);

const Meters = () => (
  <MetersPanel>
    <MeterBox><MeterClip><span /><span /></MeterClip></MeterBox>
    <svg width="4" height="340" viewBox="0 0 4 340" fill="#8a8a8a" shapeRendering="crispEdges">
      {Array.from({ length: 52 }, (_, i) => (
        <rect key={i} y={37 + Math.round((i * 35) / 6)} width={i % 6 === 0 ? 4 : 2} height="1" />
      ))}
    </svg>
    <MeterScale>{levels.map((l) => <div key={l}>{l}</div>)}</MeterScale>
  </MetersPanel>
);

const Effects = () => (
  <EffectsPanel>
    <PanelHeader>效果</PanelHeader>
    <EffectsSearch>
      <SearchField $width={211}><Magnifier /><input type="search" aria-label="搜索效果" /></SearchField>
      <EffectFilters>
        <PlainButton aria-label="Accelerated effects"><FxBadge label="" /></PlainButton>
        <PlainButton aria-label="32-bit"><FxBadge label="32" /></PlainButton>
        <PlainButton aria-label="YUV"><FxBadge label="YUV" /></PlainButton>
      </EffectFilters>
    </EffectsSearch>
    <EffectsList>
      {effects.map((e, i) => (
        <EffectsItem key={i}>
          <Chevron />
          <Folder star={e.star} />
          {e.latin && <Small>{e.latin}&nbsp;</Small>}
          {e.label}
        </EffectsItem>
      ))}
    </EffectsList>
    <BinRow><PlainButton aria-label="New bin"><Folder /></PlainButton></BinRow>
    <SidePanelTitle>基本图形</SidePanelTitle>
    <SidePanelTitle>基本声音</SidePanelTitle>
    <SidePanelTitle><Small>Lumetri</Small>颜色</SidePanelTitle>
    <SidePanelTitle>标记</SidePanelTitle>
    <SidePanelTitle>历史记录</SidePanelTitle>
    <SidePanelTitle>信息</SidePanelTitle>
  </EffectsPanel>
);

export default function App() {
  return (
    <Page>
      <GlobalStyle />
      <TitleBar>
        <AppLogo>Pr</AppLogo>
        <span>Adobe Premiere Pro 2021 - D:\pr的练习\4\pr04\未命名 *</span>
        <WindowButtons>
          <PlainButton aria-label="Minimize">
            <svg width="10" height="1"><rect width="10" height="1" fill="#8d8d8d" /></svg>
          </PlainButton>
          <PlainButton aria-label="Restore">
            <svg width="11" height="11" viewBox="0 0 11 11" fill="none" stroke="#8d8d8d">
              <path d="M.5 2.500h7v8h-7zM3 .5h5.500a2 2 0 012 2V8" />
            </svg>
          </PlainButton>
        </WindowButtons>
      </TitleBar>
      <MenuBar>{menus.map((m) => <PlainButton key={m}>{m}</PlainButton>)}</MenuBar>
      <WorkspaceBar>
        <HomeArea>
          <Grip />
          <PlainButton aria-label="Home"><HomeIcon /></PlainButton>
        </HomeArea>
        <WorkspaceTabs>
          {workspaces.map((w) => (
            <WorkspaceTab key={w} $active={w === "效果"}>
              {w}
              {w === "效果" && <Burger color="#2d8ceb" />}
            </WorkspaceTab>
          ))}
        </WorkspaceTabs>
        <MoreArea>
          <PlainButton aria-label="More workspaces">
            <svg width="11" height="9" viewBox="0 0 11 9" fill="none" stroke={G} strokeWidth="1.800">
              <path d="M1 .5l3.500 4L1 8.500M6 .5l3.500 4L6 8.500" />
            </svg>
          </PlainButton>
        </MoreArea>
      </WorkspaceBar>
      <Workspace>
        <MainColumn>
          <Row $grow={565}>
            <SourcePanel>
              <SourceTabs>
                <SourceTab>效果控件</SourceTab>
                <SourceTab><span><Small>Lumetri</Small> 范围</span></SourceTab>
                <SourceTab $active>源:（无剪辑）<Burger /></SourceTab>
                <SourceTab>音频剪辑混合器:</SourceTab>
              </SourceTabs>
              <SourceTime>00:00:00:00</SourceTime>
            </SourcePanel>
            <Program />
          </Row>
          <Row $grow={332}>
            <Project />
            <ToolsPanel>
              {toolIcons.map((t, i) => (
                <Tool key={t.name} $active={i === 0} aria-label={t.name}>
                  <svg width="24" height="19" viewBox="-2 0 24 19" fill={G}>
                    {t.art}
                    {t.corner && <path d="M21.500 16v3h-3z" fill="#8a8a8a" />}
                  </svg>
                </Tool>
              ))}
            </ToolsPanel>
            <Timeline />
            <Meters />
          </Row>
        </MainColumn>
        <Effects />
      </Workspace>
      <BeatEdit />
      <AlertDialog />
      <Watermark>CSDN @拎酒游山</Watermark>
    </Page>
  );
}
